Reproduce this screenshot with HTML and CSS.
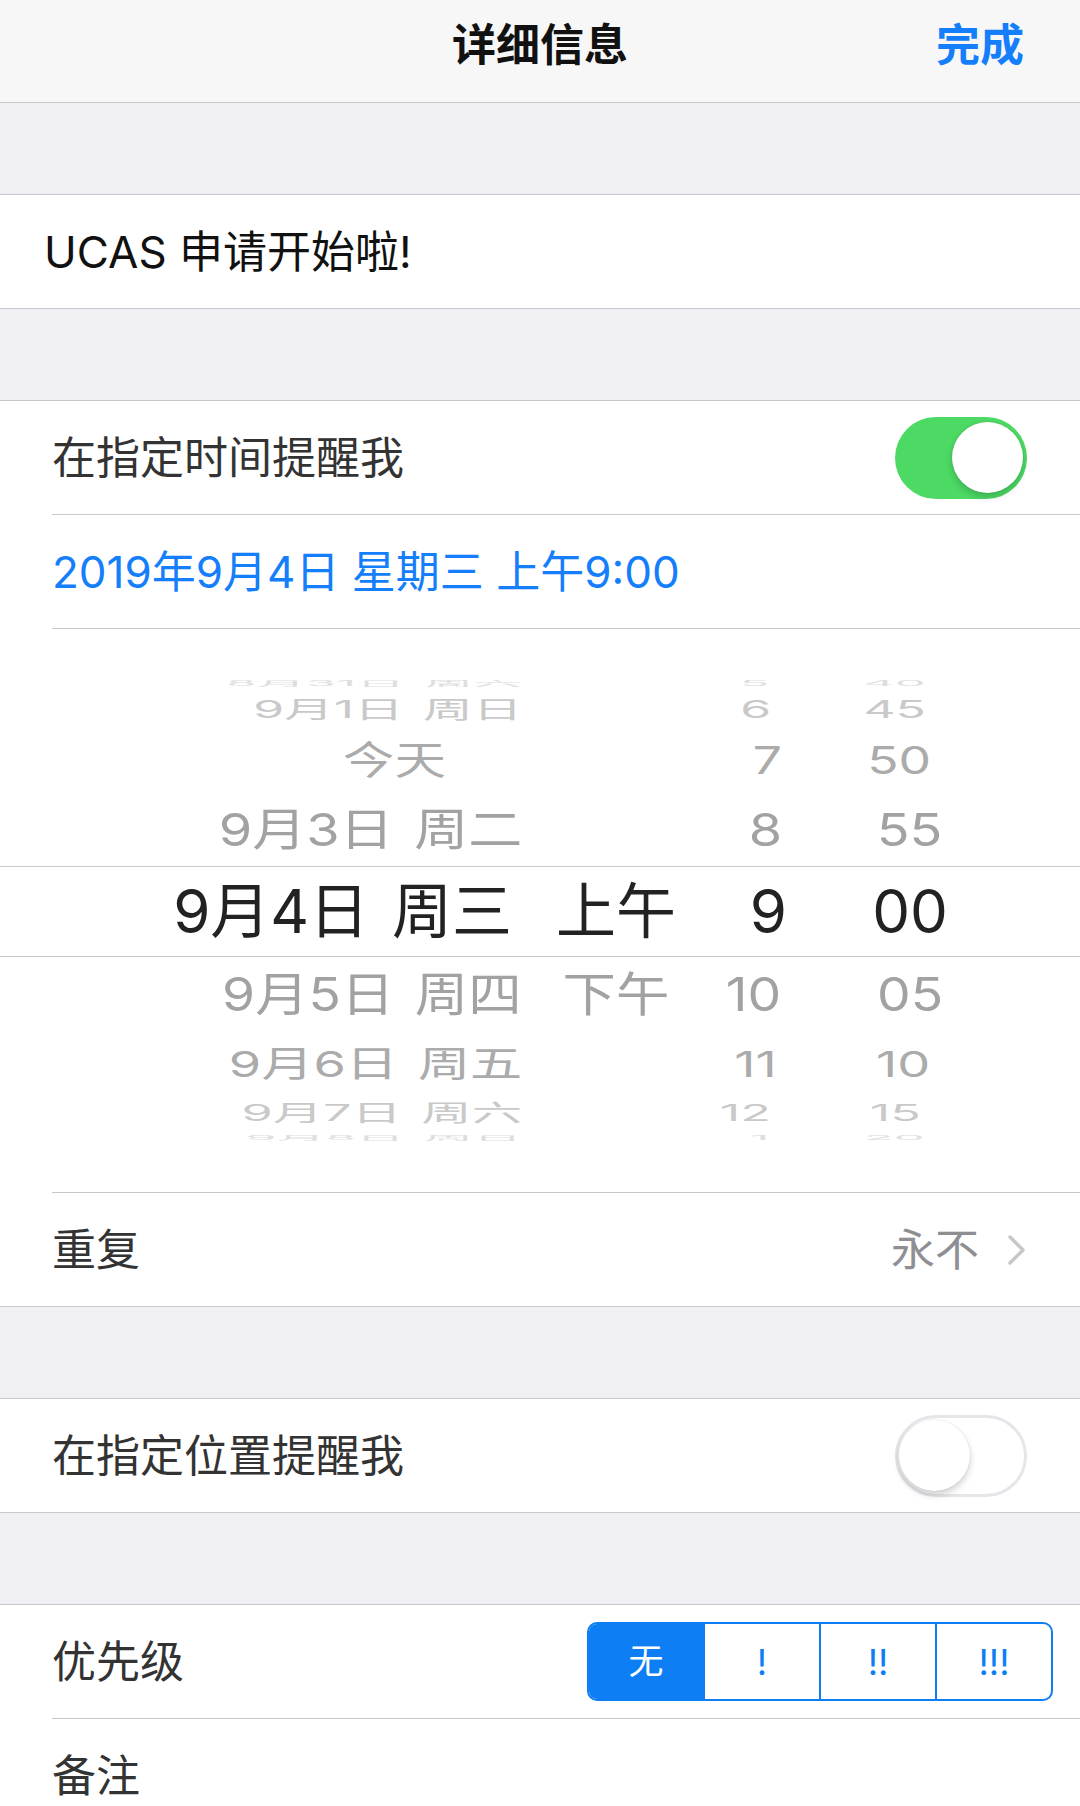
FILE: index.html
```html
<!DOCTYPE html>
<html lang="zh-CN">
<head>
<meta charset="utf-8">
<title>详细信息</title>
<link rel="stylesheet" href="styles.css">
</head>
<body>
<header class="nav">
  <div class="nav-side"></div>
  <div class="nav-title">详细信息</div>
  <div class="nav-done">完成</div>
</header>

<div class="gap"></div>
<section class="group">
  <div class="title-cell"><span class="title-text">UCAS 申请开始啦!</span></div>
</section>

<div class="gap"></div>
<section class="group">
  <div class="cell">
    <div class="cell-body sep">
      <span class="label">在指定时间提醒我</span>
      <span class="switch on"><span class="knob"></span></span>
    </div>
  </div>
  <div class="cell">
    <div class="cell-body sep">
      <span class="date-value">2019年9月4日 星期三 上午9:00</span>
    </div>
  </div>

  <div class="picker">
    <div class="prow r4u"><span class="c-date"><span class="t">8月31日 周六</span></span><span class="c-ampm"></span><span class="c-hour"><span class="t">5</span></span><span class="c-min"><span class="t">40</span></span></div>
    <div class="prow r3u"><span class="c-date"><span class="t">9月1日 周日</span></span><span class="c-ampm"></span><span class="c-hour"><span class="t">6</span></span><span class="c-min"><span class="t">45</span></span></div>
    <div class="prow r2u"><span class="c-date"><span class="t today">今天</span></span><span class="c-ampm"></span><span class="c-hour"><span class="t">7</span></span><span class="c-min"><span class="t">50</span></span></div>
    <div class="prow r1u"><span class="c-date"><span class="t">9月3日 周二</span></span><span class="c-ampm"></span><span class="c-hour"><span class="t">8</span></span><span class="c-min"><span class="t">55</span></span></div>
    <div class="prow r0"><span class="c-date"><span class="t">9月4日 周三</span></span><span class="c-ampm"><span class="t">上午</span></span><span class="c-hour"><span class="t">9</span></span><span class="c-min"><span class="t">00</span></span></div>
    <div class="prow r1d"><span class="c-date"><span class="t">9月5日 周四</span></span><span class="c-ampm"><span class="t">下午</span></span><span class="c-hour"><span class="t">10</span></span><span class="c-min"><span class="t">05</span></span></div>
    <div class="prow r2d"><span class="c-date"><span class="t">9月6日 周五</span></span><span class="c-ampm"></span><span class="c-hour"><span class="t">11</span></span><span class="c-min"><span class="t">10</span></span></div>
    <div class="prow r3d"><span class="c-date"><span class="t">9月7日 周六</span></span><span class="c-ampm"></span><span class="c-hour"><span class="t">12</span></span><span class="c-min"><span class="t">15</span></span></div>
    <div class="prow r4d"><span class="c-date"><span class="t">9月8日 周日</span></span><span class="c-ampm"></span><span class="c-hour"><span class="t">1</span></span><span class="c-min"><span class="t">20</span></span></div>
  </div>

  <div class="cell">
    <div class="cell-body">
      <span class="label">重复</span>
      <span class="detail">
        <span class="detail-text">永不</span>
        <svg class="chevron" width="20" height="32" viewBox="0 0 20 32"><polyline points="3,3 16,16 3,29" fill="none" stroke="#c7c7cc" stroke-width="3.5" stroke-linecap="round" stroke-linejoin="round"/></svg>
      </span>
    </div>
  </div>
</section>

<div class="gap"></div>
<section class="group">
  <div class="cell">
    <div class="cell-body">
      <span class="label">在指定位置提醒我</span>
      <span class="switch off"><span class="knob"></span></span>
    </div>
  </div>
</section>

<div class="gap"></div>
<section class="group">
  <div class="cell">
    <div class="cell-body sep seg-body">
      <span class="label">优先级</span>
      <div class="seg">
        <span class="seg-item active">无</span>
        <span class="seg-item">!</span>
        <span class="seg-item">!!</span>
        <span class="seg-item">!!!</span>
      </div>
    </div>
  </div>
  <div class="cell">
    <div class="cell-body">
      <span class="label">备注</span>
    </div>
  </div>
</section>
</body>
</html>
```

FILE: styles.css
```css
html, body {
  margin: 0;
  padding: 0;
}
body {
  width: 1080px;
  height: 1806px;
  overflow: hidden;
  background: #efeff4;
  font-family: Inter, "Noto Sans CJK SC", "Noto Sans", sans-serif;
  color: #333;
}

/* nav bar */
.nav {
  height: 102px;
  background: #f7f7f8;
  border-bottom: 1px solid #c8c7cc;
  display: grid;
  grid-template-columns: 1fr auto 1fr;
  align-items: center;
}
.nav-title {
  font-size: 44px;
  font-weight: 600;
  color: #111;
  line-height: 1;
  padding-bottom: 12px;
}
.nav-done {
  justify-self: end;
  font-size: 44px;
  font-weight: 600;
  color: #147efb;
  line-height: 1;
  padding-right: 56px;
  padding-bottom: 12px;
}

.gap {
  height: 91px;
}

.group {
  background: #fff;
  border-top: 1px solid #c8c7cc;
  border-bottom: 1px solid #c8c7cc;
}

.title-cell {
  height: 113px;
  display: flex;
  align-items: center;
  padding-left: 44px;
}
.title-text {
  font-size: 44px;
  color: #111;
  line-height: 1;
}

.cell {
  padding-left: 52px;
}
.cell-body {
  height: 113px;
  display: flex;
  align-items: center;
  justify-content: space-between;
  padding-right: 53px;
}
.cell-body.sep {
  border-bottom: 1px solid #c8c7cc;
}
.label {
  font-size: 44px;
  line-height: 1;
  color: #333;
}
.date-value {
  font-size: 44px;
  line-height: 1;
  color: #147efb;
}

/* switch */
.switch {
  flex: none;
  width: 132px;
  height: 82px;
  box-sizing: border-box;
  border-radius: 41px;
  display: flex;
  align-items: center;
  padding: 0 4px;
}
.switch.on {
  background: #4cd964;
  justify-content: flex-end;
}
.switch.off {
  background: #fff;
  border: 3px solid #e5e5ea;
  padding: 0 1px;
  justify-content: flex-start;
}
.knob {
  width: 71px;
  height: 71px;
  border-radius: 50%;
  background: #fff;
  box-shadow: 0 4px 7px rgba(0, 0, 0, 0.18), 0 0 0 1px rgba(0, 0, 0, 0.04);
}

/* picker */
.picker {
  height: 564px;
  box-sizing: border-box;
  padding-top: 44px;
  overflow: hidden;
  background: linear-gradient(#c8c7cc, #c8c7cc) no-repeat 52px 100% / calc(100% - 52px) 1px, #fff;
}
.prow {
  display: grid;
  grid-template-columns: 548px 136px 103px 183px;
  grid-template-rows: minmax(0, 1fr);
  box-sizing: border-box;
  font-size: 60px;
  --sx: 1;
  --sy: 1;
  --hx: 0px;
  --mx: 0px;
}
.prow > span {
  line-height: inherit;
}
.c-date {
  text-align: right;
  padding-right: 26px;
  word-spacing: 6px;
}
.c-ampm {
  text-align: center;
}
.c-hour {
  text-align: right;
}
.c-min {
  text-align: center;
  padding-left: 63px;
}
.t {
  display: inline-block;
  line-height: inherit;
  vertical-align: top;
  white-space: nowrap;
  transform: scale(var(--sx), var(--sy));
  transform-origin: center center;
}
.c-date .t {
  transform-origin: right center;
}
.c-hour .t {
  transform-origin: right center;
  transform: translateX(var(--hx)) scale(var(--sx), var(--sy));
}
.c-min .t {
  transform: translateX(var(--mx)) scale(var(--sx), var(--sy));
}
.r0 .c-date .t {
  margin-right: 10px;
}
.t.today {
  margin-right: 76px;
}

.r4u { height: 20px; line-height: 20px; color: #dedede; --sx: 0.82; --sy: 0.12; --hx: -18px; --mx: -16px; }
.r3u { height: 20px; line-height: 20px; margin-top: 6px; color: #c9c9c9; --sx: 0.83; --sy: 0.4; --hx: -16px; --mx: -15px; }
.r2u { height: 40px; line-height: 40px; margin-top: 21px; color: #ababab; --sx: 0.86; --sy: 0.64; --hx: -5px; --mx: -11px; }
.r1u { height: 50px; line-height: 50px; margin-top: 24px; color: #a2a2a2; --sx: 0.9; --sy: 0.75; --hx: -5px; --mx: -1px; }
.r0 {
  height: 91px;
  line-height: 89px;
  margin-top: 12px;
  color: #222;
  border-top: 1px solid #c8c7cc;
  border-bottom: 1px solid #c8c7cc;
}
.r1d { height: 50px; line-height: 50px; margin-top: 12px; color: #a2a2a2; --sx: 0.89; --sy: 0.77; --hx: -6px; --mx: 0px; }
.r2d { height: 40px; line-height: 40px; margin-top: 25px; color: #ababab; --sx: 0.87; --sy: 0.6; --hx: -10px; --mx: -7px; }
.r3d { height: 20px; line-height: 20px; margin-top: 19px; color: #c9c9c9; --sx: 0.84; --sy: 0.38; --hx: -16px; --mx: -15px; }
.r4d { height: 20px; line-height: 20px; margin-top: 5px; color: #dedede; --sx: 0.82; --sy: 0.1; --hx: -18px; --mx: -16px; }

/* detail */
.detail {
  display: flex;
  align-items: center;
}
.detail-text {
  font-size: 44px;
  line-height: 1;
  color: #8e8e93;
}
.chevron {
  display: block;
  margin-left: 28px;
}

/* segmented control */
.seg-body {
  padding-right: 27px;
}
.seg {
  flex: none;
  width: 466px;
  height: 79px;
  box-sizing: border-box;
  border: 2px solid #0d7ef4;
  border-radius: 10px;
  overflow: hidden;
  display: flex;
}
.seg-item {
  flex: 1;
  box-sizing: border-box;
  display: flex;
  align-items: center;
  justify-content: center;
  font-size: 36px;
  line-height: 1;
  color: #0d7ef4;
  border-left: 2px solid #0d7ef4;
}
.seg-item:first-child {
  border-left: none;
}
.seg-item.active {
  background: #0d7ef4;
  color: #fff;
  font-size: 35px;
}
```
